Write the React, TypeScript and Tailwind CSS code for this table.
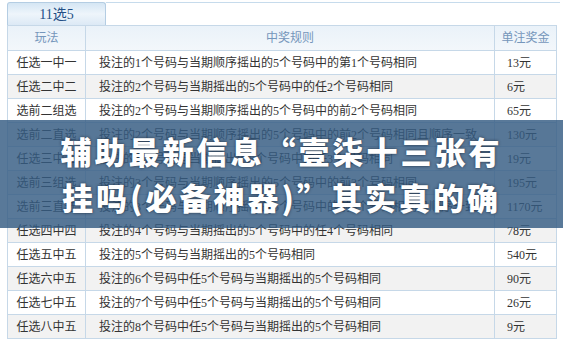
import React from 'react';

const rows: [string, string, string][] = [
  ['任选一中一', '投注的1个号码与当期顺序摇出的5个号码中的第1个号码相同', '13元'],
  ['任选二中二', '投注的2个号码与当期摇出的5个号码中的任2个号码相同', '6元'],
  ['选前二组选', '投注的2个号码与当期顺序摇出的5个号码中的前2个号码相同', '65元'],
  ['选前二直选', '投注的2个号码与当期顺序摇出的5个号码中的前2个号码相同且顺序一致', '130元'],
  ['任选三中三', '投注的3个号码与当期摇出的5个号码中的任3个号码相同', '19元'],
  ['选前三组选', '投注的3个号码与当期顺序摇出的5个号码中的前3个号码相同', '195元'],
  ['选前三直选', '投注的3个号码与当期顺序摇出的5个号码中的前3个号码相同且顺序一致', '1170元'],
  ['任选四中四', '投注的4个号码与当期摇出的5个号码中的任4个号码相同', '78元'],
  ['任选五中五', '投注的5个号码与当期摇出的5个号码相同', '540元'],
  ['任选六中五', '投注的6个号码中任5个号码与当期摇出的5个号码相同', '90元'],
  ['任选七中五', '投注的7个号码中任5个号码与当期摇出的5个号码相同', '26元'],
  ['任选八中五', '投注的8个号码中任5个号码与当期摇出的5个号码相同', '9元'],
];

export default function App() {
  return (
    <div className="relative w-[563px] h-[348px] bg-white overflow-hidden font-['Liberation_Serif','Noto_Sans_CJK_SC',serif] text-[12px] text-[#333]">
      {/* tab strip */}
      <div className="flex items-end pl-[7px] pt-[2px]">
        <div className="w-[99px] h-[23px] flex items-center justify-center rounded-t-[3px] border border-b-0 border-[#b4cde3] bg-gradient-to-b from-[#d5e6f4] via-[#eef5fb] to-[#dce9f5] text-[14px] text-[#234f86]">
          11选5
        </div>
        <div className="flex-1 h-[23px] border-t border-[#c6dbec] mr-[3px]" />
      </div>

      {/* rules table */}
      <table className="ml-[7px] w-[549px] border-collapse table-fixed">
        <colgroup>
          <col className="w-[78px]" />
          <col className="w-[409px]" />
          <col className="w-[62px]" />
        </colgroup>
        <thead>
          <tr className="h-[25px] bg-gradient-to-b from-[#eaf2f9] to-[#f3f7fb] text-[#7596bb]">
            <th className="border border-[#c6d8e8] font-normal">玩法</th>
            <th className="border border-[#c6d8e8] font-normal">中奖规则</th>
            <th className="border border-[#c6d8e8] font-normal">单注奖金</th>
          </tr>
        </thead>
        <tbody>
          {rows.map(([name, rule, prize], i) => (
            <tr key={name} className={`h-[24px] ${i % 2 === 1 ? 'bg-[#f2f2f2]' : 'bg-white'}`}>
              <td className="border border-[#c6d8e8] text-center">{name}</td>
              <td className="border border-[#c6d8e8] pl-[13px] whitespace-nowrap">{rule}</td>
              <td className="border border-[#c6d8e8] pl-[12px] whitespace-nowrap">{prize}</td>
            </tr>
          ))}
        </tbody>
      </table>

      {/* headline band over the table */}
      <div className="absolute left-0 right-0 top-[120px] h-[108px] bg-[rgba(52,92,130,0.82)] flex flex-col items-center justify-center">
        <div className="font-['Noto_Sans_CJK_SC',sans-serif] font-black text-white text-[31px] leading-[46px] tracking-[3px] text-center [text-shadow:0_0_3px_rgba(20,30,45,0.8)]">
          <div>辅助最新信息“壹柒十三张有</div>
          <div>挂吗(必备神器)”其实真的确</div>
        </div>
      </div>
    </div>
  );
}
